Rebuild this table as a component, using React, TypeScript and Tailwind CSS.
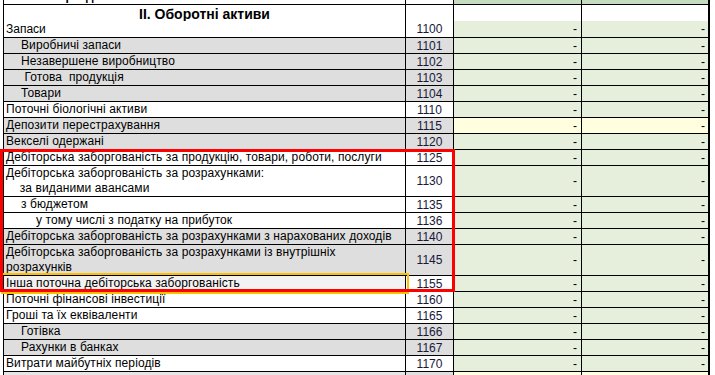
type Row = {
  label: string
  code: string
  indent?: number
  lbg?: string
  cbg?: string
  vbg?: string
  tall?: boolean
  lines?: string[]
}

const GREY = 'bg-[#dedede]'
const WHITE = 'bg-white'
const GREEN = 'bg-[#e6eedc]'
const YELLOW = 'bg-[#ffffe0]'

const rows: Row[] = [
  { label: 'Виробничі запаси', code: '1101', indent: 1, lbg: GREY, cbg: GREY },
  { label: 'Незавершене виробництво', code: '1102', indent: 1, lbg: GREY, cbg: GREY },
  { label: ' Готова  продукція', code: '1103', indent: 1, lbg: GREY, cbg: GREY },
  { label: 'Товари', code: '1104', indent: 1, lbg: GREY, cbg: GREY },
  { label: 'Поточні біологічні активи', code: '1110' },
  { label: 'Депозити перестрахування', code: '1115', lbg: GREY, cbg: GREY, vbg: YELLOW },
  { label: 'Векселі одержані', code: '1120', lbg: GREY, cbg: GREY },
  { label: 'Дебіторська заборгованість за продукцію, товари, роботи, послуги', code: '1125' },
  {
    label: '',
    code: '1130',
    tall: true,
    lines: ['Дебіторська заборгованість за розрахунками:', '    за виданими авансами'],
  },
  { label: 'з бюджетом', code: '1135', indent: 1 },
  { label: 'у тому числі з податку на прибуток', code: '1136', indent: 2 },
  { label: 'Дебіторська заборгованість за розрахунками з нарахованих доходів', code: '1140', lbg: GREY, cbg: GREY },
  {
    label: '',
    code: '1145',
    tall: true,
    lbg: GREY,
    cbg: GREY,
    lines: ['Дебіторська заборгованість за розрахунками із внутрішніх', 'розрахунків'],
  },
  { label: 'Інша поточна дебіторська заборгованість', code: '1155', lbg: 'bg-[#f2f2f2]' },
  { label: 'Поточні фінансові інвестиції', code: '1160' },
  { label: 'Гроші та їх еквіваленти', code: '1165' },
  { label: 'Готівка', code: '1166', indent: 1, lbg: GREY, cbg: GREY },
  { label: 'Рахунки в банках', code: '1167', indent: 1, lbg: GREY, cbg: GREY },
  { label: 'Витрати майбутніх періодів', code: '1170' },
]

const pad = ['pl-[2px]', 'pl-[17px]', 'pl-[32px]']

function Line({ r }: { r: Row }) {
  const h = r.tall ? 'h-[31px]' : 'h-[16px]'
  return (
    <div className={`flex ${h} border-b border-black`}>
      <div className={`w-[402px] border-r border-black ${r.lbg ?? WHITE} ${pad[r.indent ?? 0]} flex flex-col justify-center leading-[15px] tracking-[0.1px] whitespace-pre overflow-hidden`}>
        {r.lines ? (
          r.lines.map((t, i) => <span key={i}>{t}</span>)
        ) : (
          <span>{r.label}</span>
        )}
      </div>
      <div className={`w-[48px] border-r border-black ${r.cbg ?? WHITE} flex items-center justify-center text-[#181838]`}>
        {r.code}
      </div>
      <div className={`w-[128px] border-r border-black ${r.vbg ?? GREEN} flex items-center justify-end pr-[4px]`}>-</div>
      <div className={`w-[126px] ${r.vbg ?? GREEN} flex items-center justify-end pr-[3px]`}>-</div>
    </div>
  )
}

export default function App() {
  return (
    <div className="relative h-[375px] w-[715px] overflow-hidden bg-white pl-[3px] text-[12px] text-black" style={{ fontFamily: '"Liberation Sans", Arial, sans-serif' }}>
      <div className="-mt-[11px] w-[707px] border-l border-r-2 border-black">
        <div className="flex h-[16px] border-b border-black font-bold">
          <div className="w-[402px] border-r border-black bg-white pl-[2px] leading-[15px]">Усього за розділом I</div>
          <div className="w-[48px] border-r border-black bg-white text-center leading-[15px] font-normal">1095</div>
          <div className="w-[128px] border-r border-black bg-[#c6dcc0]" />
          <div className="w-[126px] bg-[#c6dcc0]" />
        </div>

        <div className="flex h-[16px]">
          <div className="w-[402px] border-r border-black bg-white text-center text-[14px] font-bold leading-[18px]">
            II. Оборотні активи
          </div>
          <div className="w-[48px] border-r border-black bg-white" />
          <div className="w-[128px] border-r border-black bg-white" />
          <div className="w-[126px] bg-white" />
        </div>
        <div className="flex h-[17px] border-b border-black">
          <div className="w-[402px] border-r border-black bg-white pl-[2px] leading-[17px]">Запаси</div>
          <div className="w-[48px] border-r border-black bg-white text-center leading-[17px] text-[#181838]">1100</div>
          <div className={`w-[128px] border-r border-black ${GREEN} pr-[4px] text-right leading-[17px]`}>-</div>
          <div className={`w-[126px] ${GREEN} pr-[3px] text-right leading-[17px]`}>-</div>
        </div>

        {rows.map((r) => (
          <Line key={r.code} r={r} />
        ))}

        <div className="flex h-[16px] border-b border-black">
          <div className="w-[402px] border-r border-black bg-[#e6e6e6]" />
          <div className="w-[48px] border-r border-black bg-[#e0e0e0]" />
          <div className={`w-[128px] border-r border-black ${YELLOW}`} />
          <div className={`w-[126px] ${YELLOW}`} />
        </div>
      </div>

      <div className="pointer-events-none absolute left-[1px] top-[273px] h-[21px] w-[408px] border-2 border-[#ffc000]" />
      <div className="pointer-events-none absolute left-0 top-[149px] h-[143px] w-[455px] border-[3px] border-[#ff0000]" />
    </div>
  )
}
